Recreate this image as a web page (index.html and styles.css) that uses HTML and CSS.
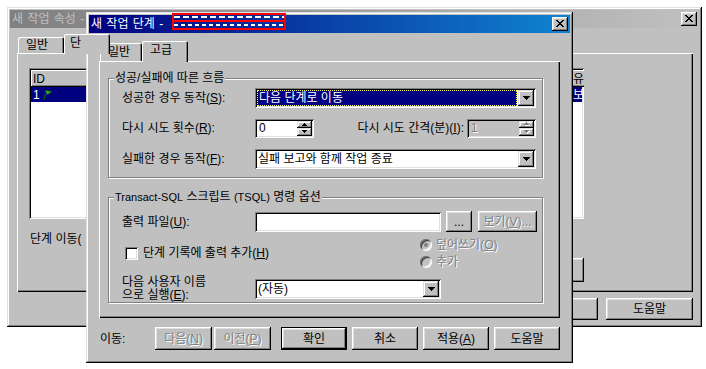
FILE: index.html
```html
<!DOCTYPE html>
<html lang="ko">
<head>
<meta charset="utf-8">
<title>새 작업 단계</title>
<link rel="stylesheet" href="styles.css">
</head>
<body>
<div class="win back">
  <div class="titlebar inactive">
    <span class="title-text">새 작업 속성 - </span>
    <span class="close"><svg width="8" height="7" viewBox="0 0 8 7" shape-rendering="crispEdges"><path d="M0 0h2v1H0zM6 0h2v1H6zM1 1h2v1H1zM5 1h2v1H5zM2 2h4v1H2zM3 3h2v1H3zM2 4h4v1H2zM1 5h2v1H1zM5 5h2v1H5zM0 6h2v1H0zM6 6h2v1H6z"/></svg></span>
  </div>
  <div class="back-body">
    <div class="tabs back-tabs">
      <div class="tab b-t1">일반</div>
      <div class="tab sel b-t2">단</div>
    </div>
    <div class="panel back-panel">
      <div class="list">
        <div class="list-head">
          <div class="hcell c-id">ID</div>
          <div class="hcell c-name"></div>
          <div class="hcell c-type">유형</div>
        </div>
        <div class="list-row selected">
          <div class="cell c-id">1 <svg class="flag" width="11" height="11" viewBox="0 0 11 11"><path d="M3 1.5 L10 2.5 L5.5 5.5 Z" fill="#3cc43c" stroke="#0a5a0a" stroke-width="1"/><path d="M4 4 L2 10.5" stroke="#0a5a0a" stroke-width="1.4" fill="none"/></svg></div>
          <div class="cell c-name"></div>
          <div class="cell c-type">보고</div>
        </div>
      </div>
      <div class="move-label">단계 이동(</div>
      <div class="step-buttons">
        <div class="btn step"></div>
      </div>
    </div>
    <div class="dlg-buttons">
      <div class="btn wide"></div>
      <div class="btn wide">도움말</div>
    </div>
  </div>
</div>

<div class="win front">
  <div class="titlebar active">
    <span class="title-text">새 작업 단계 - </span><span class="redact"></span>
    <span class="close"><svg width="8" height="7" viewBox="0 0 8 7" shape-rendering="crispEdges"><path d="M0 0h2v1H0zM6 0h2v1H6zM1 1h2v1H1zM5 1h2v1H5zM2 2h4v1H2zM3 3h2v1H3zM2 4h4v1H2zM1 5h2v1H1zM5 5h2v1H5zM0 6h2v1H0zM6 6h2v1H6z"/></svg></span>
  </div>
  <div class="front-body">
    <div class="tabs front-tabs">
      <div class="tab f-t1">일반</div>
      <div class="tab sel f-t2">고급</div>
    </div>
    <div class="panel front-panel">
      <div class="group g1">
        <span class="group-label">성공/실패에 따른 흐름</span>
        <div class="frow r1">
          <span class="flabel">성공한 경우 동작(<u>S</u>):</span>
          <div class="combo focus">
            <div class="combo-text"><span class="hl">다음 단계로 이동</span></div>
            <div class="drop"><svg width="7" height="4" viewBox="0 0 7 4" shape-rendering="crispEdges"><path d="M0 0h7v1H0zM1 1h5v1H1zM2 2h3v1H2zM3 3h1v1H3z"/></svg></div>
          </div>
        </div>
        <div class="frow r2">
          <span class="flabel">다시 시도 횟수(<u>R</u>):</span>
          <div class="spin">
            <span class="spin-val">0</span>
            <div class="spin-btns">
              <div class="sb"><svg width="5" height="3" viewBox="0 0 5 3" shape-rendering="crispEdges"><path d="M2 0h1v1H2zM1 1h3v1H1zM0 2h5v1H0z"/></svg></div>
              <div class="sb"><svg width="5" height="3" viewBox="0 0 5 3" shape-rendering="crispEdges"><path d="M0 0h5v1H0zM1 1h3v1H1zM2 2h1v1H2z"/></svg></div>
            </div>
          </div>
          <span class="flabel2">다시 시도 간격(분)(<u>I</u>):</span>
          <div class="spin disabled">
            <span class="spin-val">1</span>
            <div class="spin-btns">
              <div class="sb"><svg width="6" height="4" viewBox="0 0 6 4" shape-rendering="crispEdges"><path fill="#fff" d="M3 1h1v1H3zM2 2h3v1H2zM1 3h5v1H1z"/><path fill="#808080" d="M2 0h1v1H2zM1 1h3v1H1zM0 2h5v1H0z"/></svg></div>
              <div class="sb"><svg width="6" height="4" viewBox="0 0 6 4" shape-rendering="crispEdges"><path fill="#fff" d="M1 1h5v1H1zM2 2h3v1H2zM3 3h1v1H3z"/><path fill="#808080" d="M0 0h5v1H0zM1 1h3v1H1zM2 2h1v1H2z"/></svg></div>
            </div>
          </div>
        </div>
        <div class="frow r3">
          <span class="flabel">실패한 경우 동작(<u>F</u>):</span>
          <div class="combo">
            <div class="combo-text"><span class="ct">실패 보고와 함께 작업 종료</span></div>
            <div class="drop"><svg width="7" height="4" viewBox="0 0 7 4" shape-rendering="crispEdges"><path d="M0 0h7v1H0zM1 1h5v1H1zM2 2h3v1H2zM3 3h1v1H3z"/></svg></div>
          </div>
        </div>
      </div>

      <div class="group g2">
        <span class="group-label"><span class="latin">Transact-SQL</span> 스크립트 <span class="latin">(TSQL)</span> 명령 옵션</span>
        <div class="frow r4">
          <span class="flabel">출력 파일(<u>U</u>):</span>
          <div class="edit"></div>
          <div class="btn small dots">...</div>
          <div class="btn small view disabled">보기(<u>V</u>)...</div>
        </div>
        <div class="frow r5">
          <div class="check">
            <span class="cbox"></span>
            <span>단계 기록에 출력 추가(<u>H</u>)</span>
          </div>
          <div class="radios">
            <div class="radio-item"><span class="rbox on"></span><span>덮어쓰기(<u>O</u>)</span></div>
            <div class="radio-item"><span class="rbox"></span><span>추가</span></div>
          </div>
        </div>
        <div class="frow r6">
          <span class="flabel two">다음 사용자 이름<br>으로 실행(<u>E</u>):</span>
          <div class="combo short">
            <div class="combo-text"><span class="ct">(자동)</span></div>
            <div class="drop"><svg width="7" height="4" viewBox="0 0 7 4" shape-rendering="crispEdges"><path d="M0 0h7v1H0zM1 1h5v1H1zM2 2h3v1H2zM3 3h1v1H3z"/></svg></div>
          </div>
        </div>
      </div>
    </div>

    <div class="nav-row">
      <span class="nav-label">이동:</span>
      <div class="btn nav disabled">다음(<u>N</u>)</div>
      <div class="btn nav nav2 disabled">이전(<u>P</u>)</div>
      <div class="btn default">확인</div>
      <div class="btn">취소</div>
      <div class="btn">적용(<u>A</u>)</div>
      <div class="btn">도움말</div>
    </div>
  </div>
</div>
</body>
</html>
```

FILE: styles.css
```css
* { box-sizing: border-box; }
html, body { margin: 0; padding: 0; }
body {
  width: 706px;
  height: 369px;
  overflow: hidden;
  position: relative;
  background: #fff;
  font-family: "Liberation Sans", "Noto Sans CJK KR", sans-serif;
  font-size: 12px;
  line-height: 14px;
  color: #000;
}
u { text-decoration: underline; text-underline-offset: 1px; }
.latin { font-size: 11px; }

/* ---------- windows ---------- */
.win {
  position: absolute;
  display: flex;
  flex-direction: column;
  padding: 3px;
  background: #c0c0c0;
  box-shadow: inset -1px -1px #000, inset 1px 1px #dfdfdf, inset -2px -2px #808080, inset 2px 2px #fff;
}
.back { left: 7px; top: 7px; width: 695px; height: 320px; }
.front { left: 86px; top: 12px; width: 487px; height: 351px; }

.titlebar {
  flex: none;
  height: 18px;
  display: flex;
  align-items: center;
  padding: 0 2px;
  white-space: pre;
  word-spacing: 1px;
}
.titlebar.active { background: linear-gradient(90deg, #000080, #1084d0); color: #fff; }
.titlebar.inactive { background: linear-gradient(90deg, #808080, #c0c0c0); color: #c0c0c0; }
.close {
  margin-left: auto;
  width: 16px;
  height: 14px;
  background: #c0c0c0;
  box-shadow: inset -1px -1px #000, inset 1px 1px #fff, inset -2px -2px #808080, inset 2px 2px #dfdfdf;
  display: flex;
  align-items: center;
  justify-content: center;
  padding: 0 1px 1px 0;
}
.close svg { display: block; fill: #000; }

.redact {
  align-self: flex-start;
  margin: -2px 0 0 4px;
  width: 114px;
  height: 17px;
  border: 2px solid #f00;
  background:
    linear-gradient(#f00, #f00) 0 5px / 100% 2px no-repeat,
    repeating-linear-gradient(90deg, #fff 0 6px, transparent 6px 9px) 0 1px / 100% 2px no-repeat,
    repeating-linear-gradient(90deg, #fff 0 4px, transparent 4px 7px) 0 9px / 100% 2px no-repeat;
}

/* ---------- tabs & panels ---------- */
.tabs { flex: none; display: flex; align-items: flex-end; }
.tab {
  flex: none;
  height: 18px;
  padding: 0 8px;
  display: flex;
  align-items: center;
  background: #c0c0c0;
  border-radius: 2px 2px 0 0;
  box-shadow: inset 1px 1px #fff, inset -1px 0 #000, inset -2px 0 #808080;
}
.tab.sel {
  position: relative;
  z-index: 1;
  height: 21px;
  margin-bottom: -1px;
  padding-bottom: 3px;
}
.panel {
  background: #c0c0c0;
  box-shadow: inset 1px 1px #fff, inset -1px -1px #000, inset -2px -2px #808080;
}

/* ---------- back window ---------- */
.back-body { flex: 1; display: flex; flex-direction: column; padding: 6px 6px 0 7px; }
.back-tabs { height: 19px; padding-left: 1px; }
.back-tabs .tab { height: 16px; }
.back-tabs .tab.sel { height: 20px; padding-left: 6px; }
.b-t1 { width: 46px; }
.b-t2 { width: 46px; }
.back-panel { height: 239px; padding: 15px 0 0 12px; }
.list {
  width: 555px;
  height: 151px;
  padding: 2px;
  background: #fff;
  overflow: hidden;
  box-shadow: inset 1px 1px #808080, inset -1px -1px #fff, inset 2px 2px #000, inset -2px -2px #dfdfdf;
}
.list-head { display: flex; height: 17px; }
.hcell {
  flex: none;
  display: flex;
  align-items: center;
  padding-left: 2px;
  background: #c0c0c0;
  box-shadow: inset -1px -1px #000, inset 1px 1px #fff, inset -2px -2px #808080;
}
.list-row { display: flex; height: 15px; }
.list-row.selected { background: #000080; color: #fff; }
.cell { flex: none; display: flex; align-items: center; padding-left: 2px; }
.c-id { width: 60px; }
.c-name { width: 480px; }
.c-type { width: 80px; }
.flag { margin-left: 2px; }
.move-label { margin: 13px 0 0 1px; }
.step-buttons { width: 555px; display: flex; justify-content: flex-end; margin-top: 12px; }
.btn.step { width: 75px; height: 24px; }
.dlg-buttons { display: flex; justify-content: flex-end; gap: 8px; margin-top: 6px; }
.btn.wide { width: 87px; height: 22px; }

/* ---------- front window ---------- */
.front-body { flex: 1; display: flex; flex-direction: column; padding: 7px 10px 0; }
.front-tabs { height: 21px; padding-left: 1px; }
.f-t1 { width: 42px; }
.f-t2 { width: 46px; }
.front-panel { height: 257px; padding: 17px 0 0 9px; }

.group {
  position: relative;
  width: 435px;
  border: 1px solid #808080;
  box-shadow: inset 1px 1px #fff, 1px 1px #fff;
}
.g1 { height: 100px; padding: 9px 6px 0 13px; }
.g2 { height: 106px; margin-top: 19px; padding: 13px 6px 0 13px; }
.group-label {
  position: absolute;
  top: -8px;
  left: 5px;
  padding: 0 1px;
  background: #c0c0c0;
  line-height: 14px;
  white-space: nowrap;
}

.frow { display: flex; align-items: center; }
.flabel { flex: none; width: 133px; white-space: nowrap; }
.flabel.two { line-height: 13px; }
.r1 { height: 20px; }
.r2 { height: 20px; margin-top: 10px; }
.r3 { height: 20px; margin-top: 11px; }
.r4 { height: 21px; }
.r5 { height: 34px; margin-top: 4px; }
.r6 { height: 28px; margin-top: 5px; }

.combo, .spin, .edit, .cbox {
  box-shadow: inset 1px 1px #808080, inset -1px -1px #fff, inset 2px 2px #000, inset -2px -2px #dfdfdf;
}
.combo {
  flex: none;
  width: 281px;
  height: 20px;
  padding: 2px;
  background: #fff;
  display: flex;
}
.combo.short { width: 186px; }
.combo-text { flex: 1; display: flex; align-items: stretch; }
.ct { display: flex; align-items: center; padding-left: 1px; }
.hl {
  flex: 1;
  display: flex;
  align-items: center;
  margin-right: 1px;
  padding-left: 1px;
  background: #000080;
  color: #fff;
  border: 1px dotted #ffff66;
}
.drop, .sb {
  flex: none;
  background: #c0c0c0;
  box-shadow: inset -1px -1px #000, inset 1px 1px #dfdfdf, inset -2px -2px #808080, inset 2px 2px #fff;
  display: flex;
  align-items: center;
  justify-content: center;
}
.drop { width: 16px; height: 16px; }
.drop svg, .sb svg { display: block; }

.spin {
  flex: none;
  width: 59px;
  height: 19px;
  padding: 2px;
  background: #fff;
  display: flex;
}
.spin-val { flex: 1; padding-left: 2px; line-height: 15px; }
.spin-btns { width: 15px; display: flex; flex-direction: column; }
.sb { flex: 1; }
.spin.disabled { width: 69px; background: #c0c0c0; }
.spin.disabled .spin-val { color: #808080; text-shadow: 1px 1px #fff; }
.flabel2 { flex: 1; text-align: right; padding-right: 3px; white-space: nowrap; }

.edit { flex: none; width: 186px; height: 20px; background: #fff; }

.btn {
  flex: none;
  width: 66px;
  height: 23px;
  display: flex;
  align-items: center;
  justify-content: center;
  background: #c0c0c0;
  white-space: nowrap;
  box-shadow: inset -1px -1px #000, inset 1px 1px #fff, inset -2px -2px #808080, inset 2px 2px #dfdfdf;
}
.btn.small { height: 21px; }
.btn.dots { width: 26px; margin-left: 5px; }
.btn.view { width: 59px; margin-left: 6px; }
.btn.disabled { color: #808080; text-shadow: 1px 1px #fff; }
.btn.default {
  box-shadow: inset 0 0 0 1px #000, inset -2px -2px #000, inset 2px 2px #fff, inset -3px -3px #808080, inset 3px 3px #dfdfdf;
}

.check { flex: none; width: 298px; display: flex; align-items: center; }
.cbox { flex: none; width: 13px; height: 13px; margin: 0 5px 0 3px; background: #fff; }
.radios { display: flex; flex-direction: column; }
.radio-item { height: 17px; display: flex; align-items: center; color: #808080; text-shadow: 1px 1px #fff; }
.rbox {
  flex: none;
  width: 12px;
  height: 12px;
  margin-right: 4px;
  border-radius: 50%;
  background: #c0c0c0;
  box-shadow: inset 1px 1px #808080, inset -1px -1px #fff, inset 2px 2px #404040, inset -2px -2px #dfdfdf;
  display: flex;
  align-items: center;
  justify-content: center;
}
.rbox.on::after { content: ""; width: 4px; height: 4px; border-radius: 50%; background: #808080; }

.nav-row { flex: none; display: flex; align-items: center; height: 23px; margin-top: 9px; gap: 5px; }
.nav-label { flex: none; width: 51px; padding-left: 1px; }
.btn.nav { width: 57px; }
.btn.nav2 { margin-left: -3px; }
.btn.nav2 + .btn { margin-left: 5px; }
```
